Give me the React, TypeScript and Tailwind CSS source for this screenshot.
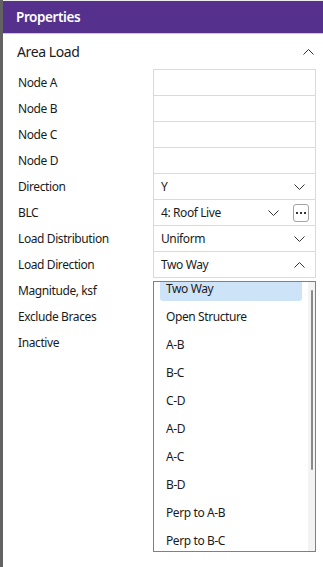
import React from "react";

const Chevron = ({ up = false }: { up?: boolean }) => (
  <svg width="11" height="6" viewBox="0 0 11 6" className="shrink-0">
    <polyline
      points={up ? "0.5,5.5 5.5,0.5 10.5,5.5" : "0.5,0.5 5.5,5.5 10.5,0.5"}
      fill="none"
      stroke="#333"
      strokeWidth="1"
    />
  </svg>
);

type Row = {
  label: string;
  value?: string;
  kind?: "empty" | "select" | "blc" | "open";
};

const rows: Row[] = [
  { label: "Node A", kind: "empty" },
  { label: "Node B", kind: "empty" },
  { label: "Node C", kind: "empty" },
  { label: "Node D", kind: "empty" },
  { label: "Direction", value: "Y", kind: "select" },
  { label: "BLC", value: "4: Roof Live", kind: "blc" },
  { label: "Load Distribution", value: "Uniform", kind: "select" },
  { label: "Load Direction", value: "Two Way", kind: "open" },
];

const extra = ["Magnitude, ksf", "Exclude Braces", "Inactive"];

const options = [
  "Two Way",
  "Open Structure",
  "A-B",
  "B-C",
  "C-D",
  "A-D",
  "A-C",
  "B-D",
  "Perp to A-B",
  "Perp to B-C",
];

export default function App() {
  return (
    <div
      className="relative flex w-[323px] h-[567px] overflow-hidden bg-white text-[#1b1b1b]"
      style={{ fontFamily: '"Segoe UI", "Noto Sans", sans-serif' }}
    >
      <div className="w-[3px] shrink-0 bg-[#626262]" />
      <div className="flex flex-1 flex-col">
        <div className="h-[1px] bg-[#ececec]" />
        <div className="flex h-[32px] items-center bg-[#55308d] pl-[13px] text-[13.5px] font-semibold tracking-[-0.4px] text-white">
          Properties
        </div>
        <div className="h-[1px] bg-[#c9c9c9]" />
        <div className="flex h-[35px] items-center justify-between pl-[14px] pr-[9px] text-[14px] tracking-[-0.4px]">
          <span>Area Load</span>
          <Chevron up />
        </div>
        <div className="flex">
          <div className="w-[150px]" />
          <div className="h-[1px] w-[163px] bg-[#dadada]" />
        </div>
        {rows.map((r) => (
          <div key={r.label} className="flex h-[26px] text-[12px] tracking-[-0.4px]">
            <div className="flex w-[150px] items-center pl-[15px]">{r.label}</div>
            <div className="flex w-[163px] items-center border-x border-b border-[#dadada] pl-[7px]">
              {r.kind !== "empty" && (
                <>
                  <span className="flex-1">{r.value}</span>
                  {r.kind === "blc" ? (
                    <>
                      <Chevron />
                      <div className="ml-[14px] mr-[6px] flex h-[18px] w-[16px] items-center justify-center gap-[2px] rounded-[3px] border border-[#a3a3a3]">
                        <span className="h-[2px] w-[2px] bg-[#333]" />
                        <span className="h-[2px] w-[2px] bg-[#333]" />
                        <span className="h-[2px] w-[2px] bg-[#333]" />
                      </div>
                    </>
                  ) : (
                    <div className="mr-[10px]">
                      <Chevron up={r.kind === "open"} />
                    </div>
                  )}
                </>
              )}
            </div>
          </div>
        ))}
        {extra.map((l) => (
          <div key={l} className="flex h-[26px] text-[12px] tracking-[-0.4px]">
            <div className="flex w-[150px] items-center pl-[15px]">{l}</div>
          </div>
        ))}
      </div>

      <div className="absolute left-[153px] top-[281px] flex h-[271px] w-[163px] overflow-hidden border border-[#4a8ad6] bg-white text-[12px] tracking-[-0.4px]">
        <div className="flex-1 overflow-hidden">
          <div className="mt-[-7px]">
            {options.map((o, i) => (
              <div key={o} className="h-[28px] px-[6px] py-[2px]">
                <div
                  className={
                    "flex h-full items-center rounded-[3px] px-[6px] " +
                    (i === 0 ? "bg-[#cde4f8]" : "")
                  }
                >
                  {o}
                </div>
              </div>
            ))}
          </div>
        </div>
        <div className="relative w-[7px] shrink-0 bg-[#f3f3f3]">
          <div className="absolute left-[3px] top-[8px] h-[180px] w-[2px] rounded-full bg-[#8a8a8a]" />
        </div>
      </div>
    </div>
  );
}
